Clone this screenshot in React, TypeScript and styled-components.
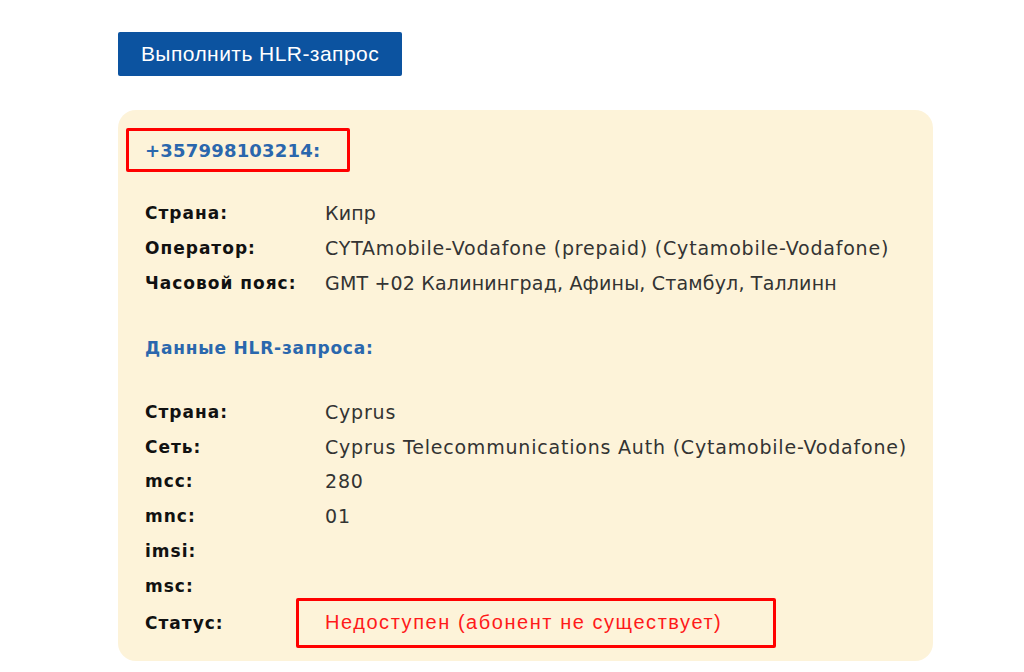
import React from 'react';
import styled, { createGlobalStyle } from 'styled-components';

const GlobalStyle = createGlobalStyle`
  body {
    margin: 0;
    background: #ffffff;
    font-family: 'DejaVu Sans', 'Liberation Sans', sans-serif;
  }
`;

const info = [
  { label: 'Страна:', value: 'Кипр', cyr: true },
  { label: 'Оператор:', value: 'CYTAmobile-Vodafone (prepaid) (Cytamobile-Vodafone)' },
  { label: 'Часовой пояс:', value: 'GMT +02 Калининград, Афины, Стамбул, Таллинн', cyr: true },
];

const hlr = [
  { label: 'Страна:', value: 'Cyprus' },
  { label: 'Сеть:', value: 'Cyprus Telecommunications Auth (Cytamobile-Vodafone)' },
  { label: 'mcc:', value: '280' },
  { label: 'mnc:', value: '01' },
  { label: 'imsi:', value: '' },
  { label: 'msc:', value: '' },
];

const App = () => {
  return (
    <Page>
      <GlobalStyle />
      <SubmitButton>Выполнить HLR-запрос</SubmitButton>
      <ResultCard>
        <PhoneBox>
          <Phone>+357998103214:</Phone>
        </PhoneBox>
        <InfoTable>
          {info.map((row) => (
            <Row key={row.label}>
              <Label>{row.label}</Label>
              <Value $cyr={row.cyr}>{row.value}</Value>
            </Row>
          ))}
        </InfoTable>
        <SectionTitle>Данные HLR-запроса:</SectionTitle>
        <InfoTable>
          {hlr.map((row) => (
            <Row key={row.label}>
              <Label>{row.label}</Label>
              <Value>{row.value}</Value>
            </Row>
          ))}
          <StatusRow>
            <Label>Статус:</Label>
            <StatusBox>Недоступен (абонент не существует)</StatusBox>
          </StatusRow>
        </InfoTable>
      </ResultCard>
    </Page>
  );
};

export default App;

const Page = styled.div`
  padding: 32px 0 0 118px;
`;

const SubmitButton = styled.button`
  display: block;
  width: 284px;
  height: 44px;
  border: none;
  border-radius: 2px;
  background: #0c53a0;
  color: #ffffff;
  font-family: 'Liberation Sans', Arial, sans-serif;
  font-size: 21px;
  letter-spacing: 0.45px;
  cursor: pointer;
`;

const ResultCard = styled.div`
  width: 815px;
  box-sizing: border-box;
  margin-top: 34px;
  padding: 18px 0 21px 8px;
  border-radius: 18px;
  background: #fdf3d9;
`;

const PhoneBox = styled.div`
  display: flex;
  align-items: center;
  width: 224px;
  height: 44px;
  box-sizing: border-box;
  padding-left: 16px;
  border: 3px solid #ff0000;
  border-radius: 2px;
`;

const Phone = styled.span`
  font-size: 18px;
  font-weight: 700;
  letter-spacing: 0.2px;
  color: #2a67ad;
`;

const InfoTable = styled.div`
  display: flex;
  flex-direction: column;
  padding-left: 19px;
`;

const Row = styled.div`
  display: grid;
  grid-template-columns: 180px auto;
  grid-template-rows: 34.8px;
  align-items: center;
  &:first-child {
    margin-top: 24px;
  }
`;

const StatusRow = styled(Row)`
  margin-top: 2px;
`;

const Label = styled.span`
  font-size: 17px;
  font-weight: 700;
  letter-spacing: 1px;
  color: #111111;
`;

const Value = styled.span<{ $cyr?: boolean }>`
  font-size: 19px;
  font-weight: 400;
  letter-spacing: ${(p) => (p.$cyr ? '0.18px' : '0.8px')};
  color: #333333;
`;

const SectionTitle = styled.div`
  display: flex;
  align-items: center;
  height: 44px;
  margin-top: 26px;
  padding-left: 19px;
  font-size: 17px;
  font-weight: 700;
  letter-spacing: 0.8px;
  color: #2a67ad;
`;

const StatusBox = styled.div`
  display: flex;
  align-items: center;
  width: 480px;
  height: 50px;
  box-sizing: border-box;
  margin: -7.6px 0 -7.6px -29px;
  padding-left: 26px;
  border: 3px solid #ff0000;
  border-radius: 2px;
  font-family: 'Liberation Sans', Arial, sans-serif;
  font-size: 20px;
  letter-spacing: 1.55px;
  color: #ff1a1a;
`;
